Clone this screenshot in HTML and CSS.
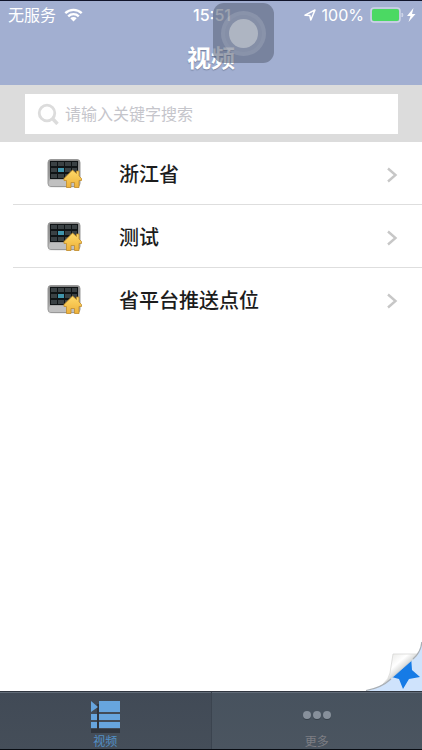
FILE: index.html
```html
<!DOCTYPE html>
<html lang="zh-CN">
<head>
<meta charset="utf-8">
<meta name="viewport" content="width=device-width, initial-scale=1">
<title>视频</title>
<link rel="stylesheet" href="styles.css">
</head>
<body>
<svg class="defs" aria-hidden="true">
  <defs>
    <linearGradient id="frame" x1="0" y1="0" x2="0" y2="1">
      <stop offset="0" stop-color="#858585"/><stop offset="0.6" stop-color="#999"/><stop offset="1" stop-color="#c4c4c4"/>
    </linearGradient>
    <linearGradient id="gold" x1="0" y1="0" x2="0" y2="1">
      <stop offset="0" stop-color="#ffd968"/><stop offset="1" stop-color="#edb13a"/>
    </linearGradient>
    <symbol id="device" viewBox="0 0 36 32">
      <ellipse cx="17" cy="28" rx="16" ry="1" fill="#eee"/>
      <rect x="1" y="0.500" width="32" height="27" rx="3" fill="url(#frame)" stroke="#999"/>
      <rect x="2" y="21" width="30" height="6" rx="2" fill="#c0c0c0"/>
      <rect x="3" y="2" width="28" height="18" fill="#101416"/>
      <path d="M4 3h6v4H4zM11 3h6v4h-6zM18 3h6v4h-6zM25 3h5v4h-5zM4 9h6v4H4zM18 9h6v4h-6zM25 9h5v4h-5zM4 15h6v4H4zM11 15h6v4h-6zM18 15h6v4h-6z" fill="#3a4144"/>
      <rect x="11" y="9" width="6" height="4" fill="#4095ac"/>
      <path d="M25.500 11L17 19.500v2h2.500v7h4.500v-5h3.500v5h4.500v-7h2.500v-2l-2.500-2.500v-5h-2.500v2.500z" fill="url(#gold)" stroke="#c08b2b" stroke-width="0.800" stroke-linejoin="round"/>
    </symbol>
    <symbol id="chevron" viewBox="0 0 12 16">
      <path d="M2 1.500L9.500 8L2 14.500" fill="none" stroke="#c7c7c7" stroke-width="2.400"/>
    </symbol>
  </defs>
</svg>
<div class="app">
  <header class="header">
    <div class="status">
      <div class="status-left">
        <span>无服务</span>
        <svg class="wifi" viewBox="0 0 19 14" aria-hidden="true">
          <path d="M1.300 5.200a11.800 11.800 0 0 1 16.400 0M4.200 8.300a7.600 7.600 0 0 1 10.600 0" fill="none" stroke="#fff" stroke-width="2.400"/>
          <path d="M9.500 13.500L6.300 10.300a4.600 4.600 0 0 1 6.400 0z" fill="#fff"/>
        </svg>
      </div>
      <time class="clock">15:51</time>
      <div class="status-right">
        <svg class="location" viewBox="0 0 12 12" aria-hidden="true">
          <path d="M1 6.200L11 1L6.800 11L5.800 6.500z" fill="none" stroke="#fff" stroke-width="1.500" stroke-linejoin="round"/>
        </svg>
        <span>100%</span>
        <svg class="battery" viewBox="0 0 46 16" aria-hidden="true">
          <rect x="1" y="1" width="29" height="14" rx="3" fill="#aab4d6" stroke="#ced5e8" stroke-width="1.500"/>
          <rect x="2" y="2" width="27" height="12" rx="2" fill="#4bd963"/>
          <path d="M32 6q2 2 0 4z" fill="#ced5e8" stroke="#ced5e8"/>
          <path d="M43.500 1L37 9h3.500L38.500 15L45.500 7H42z" fill="#fff"/>
        </svg>
      </div>
    </div>
    <h1 class="title">视频</h1>
    <button class="assistive" type="button" aria-label="AssistiveTouch"><span class="assistive-ring"><span class="assistive-dot"></span></span></button>
  </header>
  <form class="search" role="search">
    <label class="search-box">
      <svg class="search-icon" viewBox="0 0 22 22" aria-hidden="true">
        <circle cx="10" cy="10" r="7.800" fill="none" stroke="#dcdcdc" stroke-width="2.800"/>
        <path d="M15.500 15.500l5 5.500" stroke="#dcdcdc" stroke-width="3.400"/>
      </svg>
      <input class="search-input" type="search" placeholder="请输入关键字搜索" aria-label="搜索">
    </label>
  </form>
  <main class="content">
    <ul class="list">
      <li class="item"><a class="row" href="#zj"><svg class="device" aria-hidden="true"><use href="#device"/></svg><span class="name">浙江省</span><svg class="chevron" aria-hidden="true"><use href="#chevron"/></svg></a></li>
      <li class="item"><a class="row" href="#test"><svg class="device" aria-hidden="true"><use href="#device"/></svg><span class="name">测试</span><svg class="chevron" aria-hidden="true"><use href="#chevron"/></svg></a></li>
      <li class="item"><a class="row" href="#push"><svg class="device" aria-hidden="true"><use href="#device"/></svg><span class="name">省平台推送点位</span><svg class="chevron" aria-hidden="true"><use href="#chevron"/></svg></a></li>
    </ul>
    <button class="curl" type="button" aria-label="收藏">
      <svg viewBox="0 0 60 52" aria-hidden="true">
        <defs>
          <linearGradient id="fold" gradientUnits="userSpaceOnUse" x1="30" y1="16" x2="43" y2="31">
            <stop offset="0" stop-color="#ededeb"/><stop offset="0.500" stop-color="#fff"/><stop offset="0.800" stop-color="#dedfde"/><stop offset="1" stop-color="#b4b8bb"/>
          </linearGradient>
          <clipPath id="under"><path d="M4 52Q19 49 29 39L52 19Q59 12 60 2V52z"/></clipPath>
        </defs>
        <path d="M4 52Q19 49 29 39L52 19Q59 12 60 2V52z" fill="#cfe3fc"/>
        <path d="M49 17L50 31L58 38L47 40L41 50L37 40L26 37L34 30z" fill="#167be6" clip-path="url(#under)"/>
        <path d="M31 15H56Q54 18 49 22L32 37Q27 41 21 45Q27 40 28 34z" fill="url(#fold)" stroke="#d2d2d1" stroke-width="0.700"/>
        <path d="M4 51.500Q19 49 29 40M51 20Q59 13 59.800 3" fill="none" stroke="#a9afb5" stroke-width="1.200"/>
      </svg>
    </button>
  </main>
  <nav class="tabs">
    <a class="tab tab-active" href="#video" aria-current="page">
      <svg class="tab-icon" viewBox="0 0 30 32" aria-hidden="true">
        <path d="M1 28h29v4H1zM7 3v25h2V3z" fill="#30353d"/>
        <path d="M1 0L8 6L1 11zM9 0h21v11H9zM1 13h6v6H1zM9 13h21v6H9zM1 21h6v6H1zM9 21h21v6H9z" fill="#67a5de"/>
      </svg>
      <span>视频</span>
    </a>
    <a class="tab" href="#more">
      <svg class="tab-icon" viewBox="0 0 30 32" aria-hidden="true">
        <g fill="#37404a"><circle cx="5" cy="15" r="4"/><circle cx="15" cy="15" r="4"/><circle cx="25" cy="15" r="4"/></g>
        <g fill="#87909b"><circle cx="5" cy="14" r="4"/><circle cx="15" cy="14" r="4"/><circle cx="25" cy="14" r="4"/></g>
      </svg>
      <span>更多</span>
    </a>
  </nav>
</div>
</body>
</html>
```
FILE: styles.css
```css
* { box-sizing: border-box; }

body {
  margin: 0;
  background: #fff;
  color: #1c1c1c;
  font-family: Inter, "Noto Sans CJK SC", sans-serif;
}

a { color: inherit; text-decoration: none; }
button { padding: 0; border: 0; background: none; }
svg { display: block; flex: none; }
.defs { position: absolute; width: 0; height: 0; }

.app {
  display: flex;
  flex-direction: column;
  min-height: 100vh;
  border-top: 1px solid #10142a;
  border-bottom: 1px solid #080c12;
}

.header {
  position: relative;
  background: #a2afd1;
  color: #fff;
  padding-bottom: 4px;
}

.status {
  display: grid;
  grid-template-columns: 1fr auto 1fr;
  align-items: center;
  height: 28px;
  padding: 0 6px 0 8px;
  font-size: 16px;
  line-height: 24px;
}

.status-left, .status-right { display: flex; align-items: center; gap: 8px; }
.status-right { justify-content: flex-end; gap: 6px; }
.clock { font-weight: 500; }
.wifi { width: 19px; height: 14px; }
.location { width: 12px; height: 12px; }
.battery { width: 46px; height: 16px; }

.title {
  margin: 0;
  padding-top: 8px;
  font-size: 24px;
  line-height: 44px;
  font-weight: 700;
  text-align: center;
  text-shadow: 0 1px 1px #75809e;
}

.assistive {
  position: absolute;
  top: 2px;
  left: 50%;
  display: flex;
  align-items: center;
  justify-content: center;
  width: 61px;
  height: 60px;
  margin-left: 2px;
  border-radius: 11px;
  background: rgba(92, 101, 124, 0.6);
}

.assistive-ring {
  display: flex;
  padding: 4px;
  border: 4px solid rgba(255, 255, 255, 0.03);
  border-radius: 50%;
  background: rgba(255, 255, 255, 0.1);
}

.assistive-dot {
  width: 29px;
  height: 29px;
  border-radius: 50%;
  background: #aeb5c2;
}

.search { padding: 9px 24px 8px 25px; background: #dcdcdc; }

.search-box {
  display: flex;
  align-items: center;
  gap: 6px;
  height: 40px;
  padding: 0 12px;
  background: #fff;
}

.search-icon { width: 22px; height: 22px; }

.search-input {
  flex: 1;
  min-width: 0;
  padding: 0;
  border: 0;
  outline: 0;
  background: none;
  font: inherit;
  font-size: 16px;
  line-height: 24px;
  appearance: none;
}

.search-input::placeholder { color: #c5c5cb; opacity: 1; }

.content { position: relative; flex: 1; }
.list { margin: 0; padding: 0; list-style: none; }
.item { margin-left: 13px; border-bottom: 1px solid #dedede; }
.item:last-child { border-bottom: 0; }

.row {
  display: flex;
  align-items: center;
  height: 62px;
  padding: 4px 24px 0 34px;
}

.device { width: 36px; height: 32px; }
.name { flex: 1; margin-left: 36px; font-size: 20px; line-height: 28px; font-weight: 500; }
.chevron { width: 12px; height: 16px; }

.curl { position: absolute; right: 0; bottom: 0; width: 60px; height: 52px; }
.curl svg { width: 60px; height: 52px; }

.tabs {
  display: flex;
  border-top: 1px solid #303640;
  background: linear-gradient(#47525e, #4b5560);
}

.tab {
  flex: 1;
  display: flex;
  flex-direction: column;
  align-items: center;
  height: 57px;
  padding-top: 9px;
  box-shadow: inset 0 1px #626c78;
  color: #7d7e84;
  font-size: 12px;
  line-height: 18px;
}

.tab-active {
  background: linear-gradient(#414a56, #454e59);
  border-right: 1px solid #3b444f;
  color: #5290c6;
}

.tab-icon { width: 30px; height: 32px; }
```
